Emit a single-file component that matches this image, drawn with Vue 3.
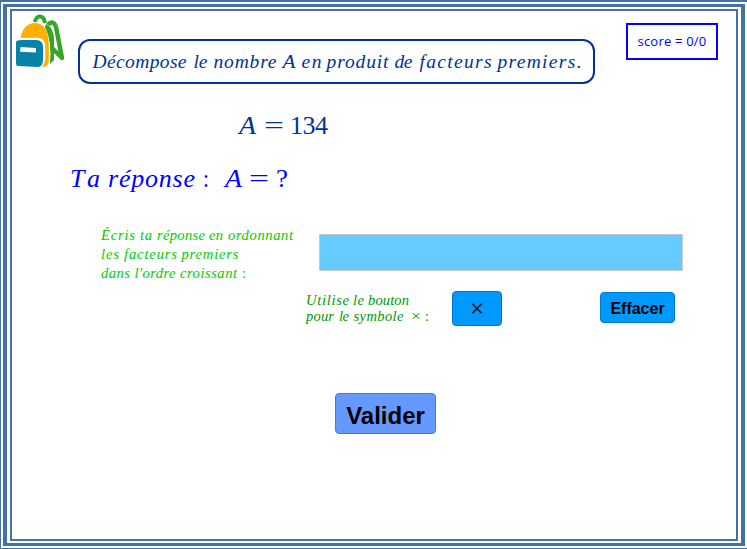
<script setup>
// Each line is a list of words: [text, start, width, upright]
const title = [
  ['Décompose', 14, 94], ['le', 115, 14], ['nombre', 135, 63], ['A', 204, 13],
  ['en', 223, 20], ['produit', 248, 62], ['de', 316, 18], ['facteurs', 341, 72],
  ['premiers.', 419, 84]
]
const given = [['A', 0, 17], ['=', 25, 20, true], ['134', 51, 38, true]]
const answer = [
  ['Ta', -1, 30], ['réponse', 37, 87], [':', 132, 6, true],
  ['A', 154, 17], ['=', 178, 20, true], ['?', 205, 12, true]
]
const order = [
  [['Écris', 0, 34], ['ta', 39, 12], ['réponse', 56, 48], ['en', 108, 14], ['ordonnant', 127, 65]],
  [['les', 0, 18], ['facteurs', 23, 53], ['premiers', 80.5, 57]],
  [['dans', 0, 29], ['l′ordre', 33.5, 41], ['croissant', 79, 57], [':', 141, 4, true]]
]
const hint = [
  [['Utilise', 0, 43], ['le', 47, 11], ['bouton', 62, 41]],
  [['pour', 0, 28], ['le', 33, 10], ['symbole', 47.5, 50], ['×', 105, 10, true], [':', 119, 4, true]]
]
// Words are tracked out; lone symbols are widened instead
const fit = (word) => (word.length > 1 ? 'spacing' : 'spacingAndGlyphs')
</script>

<template>
  <div class="frame-outer">
    <div class="frame-mid">
      <main class="frame-inner">
        <header class="header">
          <svg class="bag" viewBox="0 0 50 56" width="50" height="56">
            <path d="M19 8 C20 0.5 28 0.5 29 9" fill="none" stroke="#37a526" stroke-width="4" />
            <path d="M32 11 C35 7 38.5 8 40 13 L46 44 L36 34" fill="none" stroke="#37a526" stroke-width="4.4" stroke-linejoin="round" />
            <path d="M30 10 Q38 14 38 26 L38 46 L34 50 Q36 27 29 13Z" fill="#37a526" />
            <path d="M4.5 24 C6 14 12 9 19 9 C29 9 32.8 18 32.8 32 V48 Q32 53 26 53 Q29.3 49 29.3 43 V32 Q29 23.8 21 23.8Z" fill="#ffb000" />
            <path d="M0 28 Q0 26 6 26 H20 Q27 26 27 33 V45 Q27 53 22 53 L2 52 Q0 52 0 49Z" fill="#0783a5" />
            <path d="M4.5 33 L20 34 V38.5 L4 37.8Z" fill="#fff" />
          </svg>
          <h1 class="title">
            <svg width="513" height="41">
              <text v-for="w in title" :key="w[1]" :x="w[1] - 1.5" y="26.5" :textLength="w[2]" :lengthAdjust="fit(w[0])">{{ w[0] }}</text>
            </svg>
          </h1>
          <div class="score">score = 0/0</div>
        </header>

        <svg class="given" width="100" height="36">
          <text v-for="w in given" :key="w[1]" :class="{ upright: w[3] }" :x="w[1]" y="24.4" :textLength="w[2]" :lengthAdjust="fit(w[0])">{{ w[0] }}</text>
        </svg>
        <svg class="answer" width="230" height="36">
          <text v-for="w in answer" :key="w[1]" :class="{ upright: w[3] }" :x="w[1]" y="24.4" :textLength="w[2]" :lengthAdjust="fit(w[0])">{{ w[0] }}</text>
        </svg>

        <section class="entry">
          <svg class="order" width="218" height="60">
            <template v-for="(line, i) in order" :key="i">
              <text v-for="w in line" :key="w[1]" :class="{ upright: w[3] }" :x="w[1]" :y="16.5 + i * 19.3" :textLength="w[2]" :lengthAdjust="fit(w[0])">{{ w[0] }}</text>
            </template>
          </svg>
          <input class="field" type="text" aria-label="A" />
        </section>

        <section class="tools">
          <svg class="hint" width="147" height="36">
            <template v-for="(line, i) in hint" :key="i">
              <text v-for="w in line" :key="w[1]" :class="{ upright: w[3] }" :x="w[1]" :y="14.3 + i * 15.3" :textLength="w[2]" :lengthAdjust="fit(w[0])">{{ w[0] }}</text>
            </template>
          </svg>
          <button class="btn times">×</button>
          <button class="btn clear">Effacer</button>
        </section>

        <button class="btn submit">Valider</button>
      </main>
    </div>
  </div>
</template>

<style>
body {
  margin: 0;
  background: #fff;
}
</style>

<style scoped>
.frame-outer,
.frame-mid,
.frame-inner {
  box-sizing: border-box;
  border: solid #4372a3;
}
.frame-outer {
  width: 747px;
  height: 549px;
  border-width: 2px 0 1px 1px;
  padding: 2px;
}
.frame-mid {
  height: 100%;
  border-width: 3px 4px 3px 4px;
  padding: 2px 3px 2px 3px;
}
.frame-inner {
  height: 100%;
  border-width: 2px;
  display: flex;
  flex-direction: column;
  align-items: flex-start;
}
svg {
  display: block;
  overflow: visible;
  flex: none;
}
text {
  font-family: 'Liberation Serif', serif;
  font-style: italic;
  fill: currentColor;
}
.upright {
  font-style: normal;
}
.header {
  display: flex;
  align-items: flex-start;
  width: 100%;
  height: 94px;
}
.bag {
  margin: 3px 12px 0 4px;
}
.title {
  box-sizing: border-box;
  margin: 28px 31px 0 0;
  width: 517px;
  height: 45px;
  border: 2px solid #003399;
  border-radius: 12px;
  color: #003399;
  font-size: 19.5px;
  font-weight: normal;
}
.score {
  box-sizing: border-box;
  margin-top: 12px;
  width: 92px;
  height: 37px;
  border: 2px solid #0000ff;
  color: #0000ff;
  font: 13px/32px 'Open Sans', sans-serif;
  letter-spacing: 0.2px;
  text-align: center;
  white-space: nowrap;
}
.given {
  margin: 5px 0 0 227px;
  color: #003399;
  font-size: 26px;
}
.answer {
  margin: 17px 0 0 59px;
  color: #0000ff;
  font-size: 26px;
}
.entry {
  display: flex;
  align-items: flex-start;
  margin: 24px 0 0 89px;
  height: 60px;
}
.order {
  color: #00cc00;
  font-size: 14.6px;
}
.field {
  box-sizing: border-box;
  margin: 11px 0 0;
  width: 364px;
  height: 37px;
  border: 1px solid #c8c8c8;
  background: #66ccff;
  padding: 0 8px;
  font: 20px 'Liberation Serif', serif;
}
.tools {
  display: flex;
  align-items: flex-start;
  margin: 8px 0 0 294px;
  height: 36px;
}
.hint {
  color: #009900;
  font-size: 14.6px;
}
.btn {
  box-sizing: border-box;
  padding: 0;
  border: 1px solid #0078cc;
  border-radius: 4px;
  background: #0099ff;
  color: #000;
}
.times {
  width: 50px;
  height: 35px;
  margin-left: -1px;
  font: 25px/31px 'Liberation Serif', serif;
}
.clear {
  width: 75px;
  height: 31px;
  padding-top: 3px;
  margin: 1px 0 0 98px;
  font: bold 16px/26px 'Liberation Sans', sans-serif;
}
.submit {
  width: 101px;
  height: 41px;
  padding-top: 4px;
  margin: 66px 0 0 323px;
  border-color: #5078c8;
  background: #6699ff;
  font: bold 24px/35px 'Liberation Sans', sans-serif;
}
</style>
